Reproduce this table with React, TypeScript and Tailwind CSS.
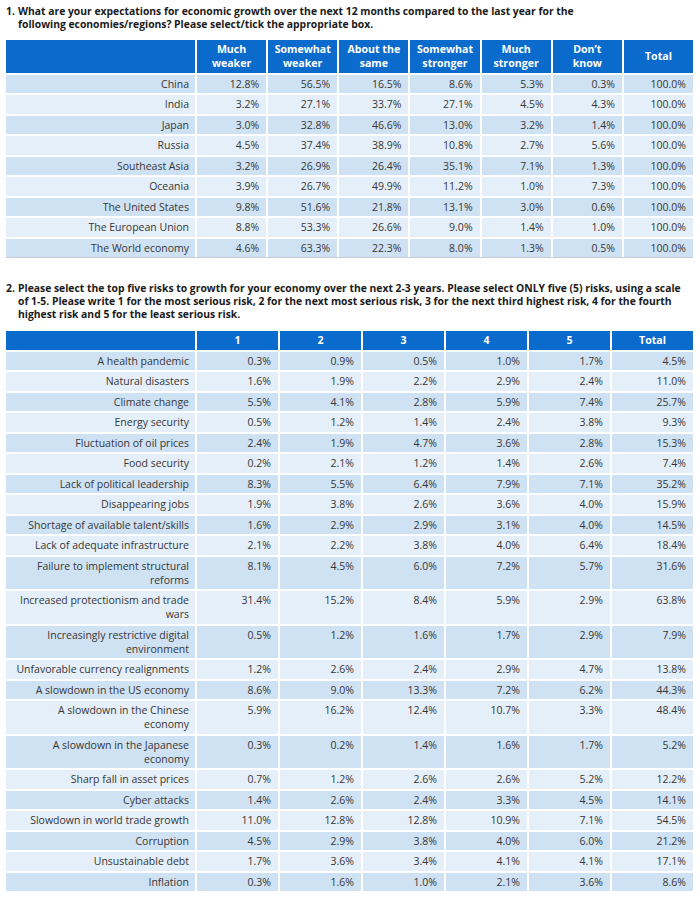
const growthCols = [
  ['Much', 'weaker'],
  ['Somewhat', 'weaker'],
  ['About the', 'same'],
  ['Somewhat', 'stronger'],
  ['Much', 'stronger'],
  ['Don’t', 'know'],
  ['Total'],
];

const growthRows: [string, string[]][] = [
  ['China', ['12.8%', '56.5%', '16.5%', '8.6%', '5.3%', '0.3%', '100.0%']],
  ['India', ['3.2%', '27.1%', '33.7%', '27.1%', '4.5%', '4.3%', '100.0%']],
  ['Japan', ['3.0%', '32.8%', '46.6%', '13.0%', '3.2%', '1.4%', '100.0%']],
  ['Russia', ['4.5%', '37.4%', '38.9%', '10.8%', '2.7%', '5.6%', '100.0%']],
  ['Southeast Asia', ['3.2%', '26.9%', '26.4%', '35.1%', '7.1%', '1.3%', '100.0%']],
  ['Oceania', ['3.9%', '26.7%', '49.9%', '11.2%', '1.0%', '7.3%', '100.0%']],
  ['The United States', ['9.8%', '51.6%', '21.8%', '13.1%', '3.0%', '0.6%', '100.0%']],
  ['The European Union', ['8.8%', '53.3%', '26.6%', '9.0%', '1.4%', '1.0%', '100.0%']],
  ['The World economy', ['4.6%', '63.3%', '22.3%', '8.0%', '1.3%', '0.5%', '100.0%']],
];

const riskRows: [string[], string[]][] = [
  [['A health pandemic'], ['0.3%', '0.9%', '0.5%', '1.0%', '1.7%', '4.5%']],
  [['Natural disasters'], ['1.6%', '1.9%', '2.2%', '2.9%', '2.4%', '11.0%']],
  [['Climate change'], ['5.5%', '4.1%', '2.8%', '5.9%', '7.4%', '25.7%']],
  [['Energy security'], ['0.5%', '1.2%', '1.4%', '2.4%', '3.8%', '9.3%']],
  [['Fluctuation of oil prices'], ['2.4%', '1.9%', '4.7%', '3.6%', '2.8%', '15.3%']],
  [['Food security'], ['0.2%', '2.1%', '1.2%', '1.4%', '2.6%', '7.4%']],
  [['Lack of political leadership'], ['8.3%', '5.5%', '6.4%', '7.9%', '7.1%', '35.2%']],
  [['Disappearing jobs'], ['1.9%', '3.8%', '2.6%', '3.6%', '4.0%', '15.9%']],
  [['Shortage of available talent/skills'], ['1.6%', '2.9%', '2.9%', '3.1%', '4.0%', '14.5%']],
  [['Lack of adequate infrastructure'], ['2.1%', '2.2%', '3.8%', '4.0%', '6.4%', '18.4%']],
  [['Failure to implement structural', 'reforms'], ['8.1%', '4.5%', '6.0%', '7.2%', '5.7%', '31.6%']],
  [['Increased protectionism and trade', 'wars'], ['31.4%', '15.2%', '8.4%', '5.9%', '2.9%', '63.8%']],
  [['Increasingly restrictive digital', 'environment'], ['0.5%', '1.2%', '1.6%', '1.7%', '2.9%', '7.9%']],
  [['Unfavorable currency realignments'], ['1.2%', '2.6%', '2.4%', '2.9%', '4.7%', '13.8%']],
  [['A slowdown in the US economy'], ['8.6%', '9.0%', '13.3%', '7.2%', '6.2%', '44.3%']],
  [['A slowdown in the Chinese', 'economy'], ['5.9%', '16.2%', '12.4%', '10.7%', '3.3%', '48.4%']],
  [['A slowdown in the Japanese', 'economy'], ['0.3%', '0.2%', '1.4%', '1.6%', '1.7%', '5.2%']],
  [['Sharp fall in asset prices'], ['0.7%', '1.2%', '2.6%', '2.6%', '5.2%', '12.2%']],
  [['Cyber attacks'], ['1.4%', '2.6%', '2.4%', '3.3%', '4.5%', '14.1%']],
  [['Slowdown in world trade growth'], ['11.0%', '12.8%', '12.8%', '10.9%', '7.1%', '54.5%']],
  [['Corruption'], ['4.5%', '2.9%', '3.8%', '4.0%', '6.0%', '21.2%']],
  [['Unsustainable debt'], ['1.7%', '3.6%', '3.4%', '4.1%', '4.1%', '17.1%']],
  [['Inflation'], ['0.3%', '1.6%', '1.0%', '2.1%', '3.6%', '8.6%']],
];

const Question = ({ num, text, width }: { num: string; text: string; width: string }) => (
  <div className={`flex text-[10.35px] leading-[13px] font-bold text-[#1a1a1a] ${width}`}>
    <span className="w-[12px] shrink-0">{num}</span>
    <p>{text}</p>
  </div>
);

export default function App() {
  return (
    <div
      className="w-[700px] h-[910px] bg-white px-[6px] pt-[5px] text-[#363636]"
      style={{ fontFamily: '"Open Sans", Lato, sans-serif' }}
    >
      <Question
        num="1."
        width="w-[600px]"
        text="What are your expectations for economic growth over the next 12 months compared to the last year for the following economies/regions? Please select/tick the appropriate box."
      />

      {/* table 1 */}
      <div className="mt-[9px] w-[687px] flex flex-col gap-[2px] text-[10.5px] leading-[14px]">
        <div className="grid grid-cols-[189px_repeat(7,1fr)] gap-x-[2px]">
          <div className="bg-[#0a6bcd]" />
          {growthCols.map((c, i) => (
            <div
              key={i}
              className="bg-[#0a6bcd] text-white font-bold text-[10.6px] text-center h-[32.5px] flex flex-col justify-center"
            >
              {c.map((l) => (
                <span key={l}>{l}</span>
              ))}
            </div>
          ))}
        </div>
        {growthRows.map(([name, vals], r) => (
          <div key={name} className="grid grid-cols-[189px_repeat(7,1fr)] gap-x-[2px]">
            <div
              className={`${r % 2 === 0 ? 'bg-[#cfe2f4]' : 'bg-[#e4eff9]'} text-right pr-[6px] py-[2.25px]`}
            >
              {name}
            </div>
            {vals.map((v, i) => (
              <div
                key={i}
                className={`${r % 2 === 0 ? 'bg-[#cfe2f4]' : 'bg-[#e4eff9]'} text-right pr-[7px] py-[2.25px]`}
              >
                {v}
              </div>
            ))}
          </div>
        ))}
      </div>
      <div className="w-[687px] h-px bg-[#c8ccd0]" />

      <div className="mt-[24px]">
        <Question
          num="2."
          width="w-[687px]"
          text="Please select the top five risks to growth for your economy over the next 2-3 years. Please select ONLY five (5) risks, using a scale of 1-5. Please write 1 for the most serious risk, 2 for the next most serious risk, 3 for the next third highest risk, 4 for the fourth highest risk and 5 for the least serious risk."
        />
      </div>

      {/* table 2 */}
      <div className="mt-[10px] w-[687px] flex flex-col gap-[2px] text-[10.5px] leading-[14px]">
        <div className="grid grid-cols-[189px_repeat(6,1fr)] gap-x-[2px]">
          <div className="bg-[#0a6bcd]" />
          {['1', '2', '3', '4', '5', 'Total'].map((c) => (
            <div key={c} className="bg-[#0a6bcd] text-white font-bold text-[10.6px] text-center py-[2.25px]">
              {c}
            </div>
          ))}
        </div>
        {riskRows.map(([name, vals], r) => (
          <div key={name[0]} className="grid grid-cols-[189px_repeat(6,1fr)] gap-x-[2px]">
            <div
              className={`${r % 2 === 0 ? 'bg-[#cfe2f4]' : 'bg-[#e4eff9]'} text-right pr-[6px] py-[2.25px] flex flex-col`}
            >
              {name.map((l) => (
                <span key={l}>{l}</span>
              ))}
            </div>
            {vals.map((v, i) => (
              <div
                key={i}
                className={`${r % 2 === 0 ? 'bg-[#cfe2f4]' : 'bg-[#e4eff9]'} text-right pr-[7px] py-[2.25px]`}
              >
                {v}
              </div>
            ))}
          </div>
        ))}
      </div>
    </div>
  );
}
